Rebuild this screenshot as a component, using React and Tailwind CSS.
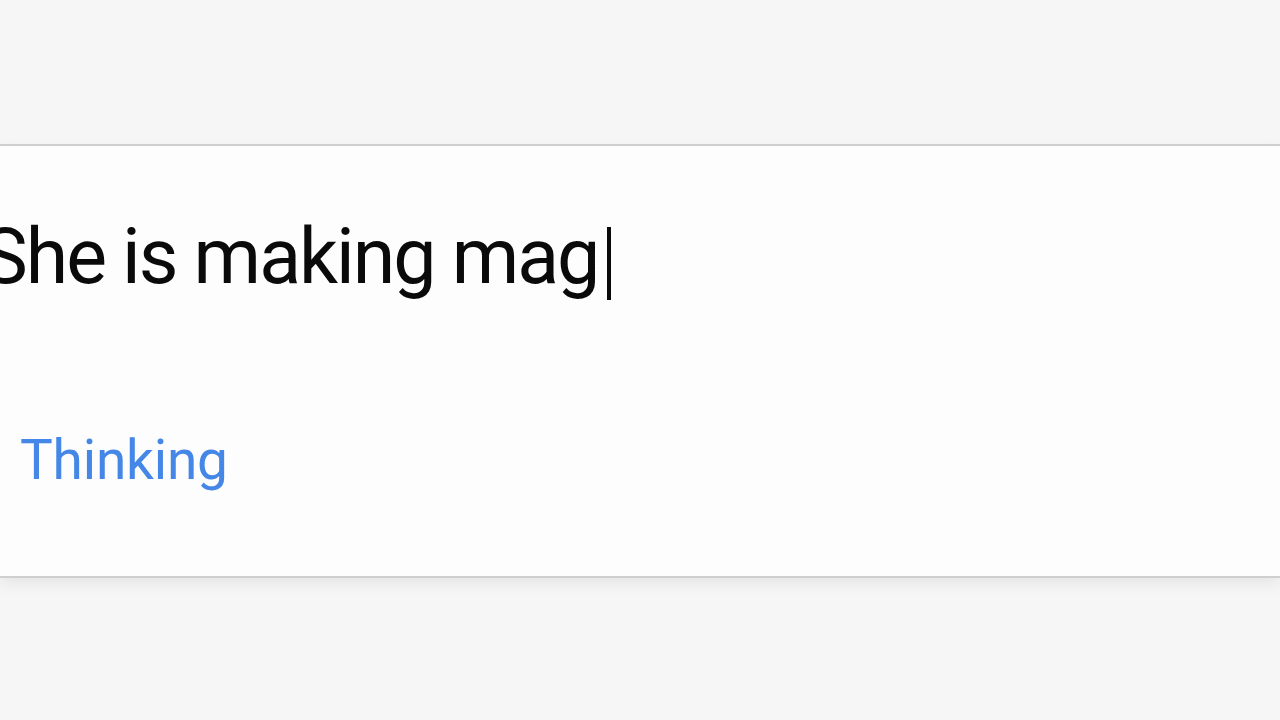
export default function App() {
  return (
    <div className="min-h-screen w-full bg-[#f6f6f6] overflow-hidden" style={{ fontFamily: "Roboto, 'Noto Sans', sans-serif" }}>
      <div className="h-[144px]" />

      <div className="bg-[#fdfdfd] border-t-2 border-b-2 border-[#cfcfcf] h-[434px] shadow-[0_6px_14px_rgba(0,0,0,0.07)]">
        <div className="pt-[66px] flex items-start whitespace-nowrap">
          <span className="ml-[-18px] text-[77px] leading-[90px] text-[#0a0a0a] tracking-[-2px]">
            She is making mag
          </span>
          <span className="mt-[15px] ml-[9px] w-[4px] h-[73px] bg-[#0a0a0a]" />
        </div>

        <div className="pt-[126px] pl-[20px]">
          <span className="text-[55px] leading-[64px] text-[#4587e6] tracking-[-0.2px]">Thinking</span>
        </div>
      </div>
    </div>
  );
}
